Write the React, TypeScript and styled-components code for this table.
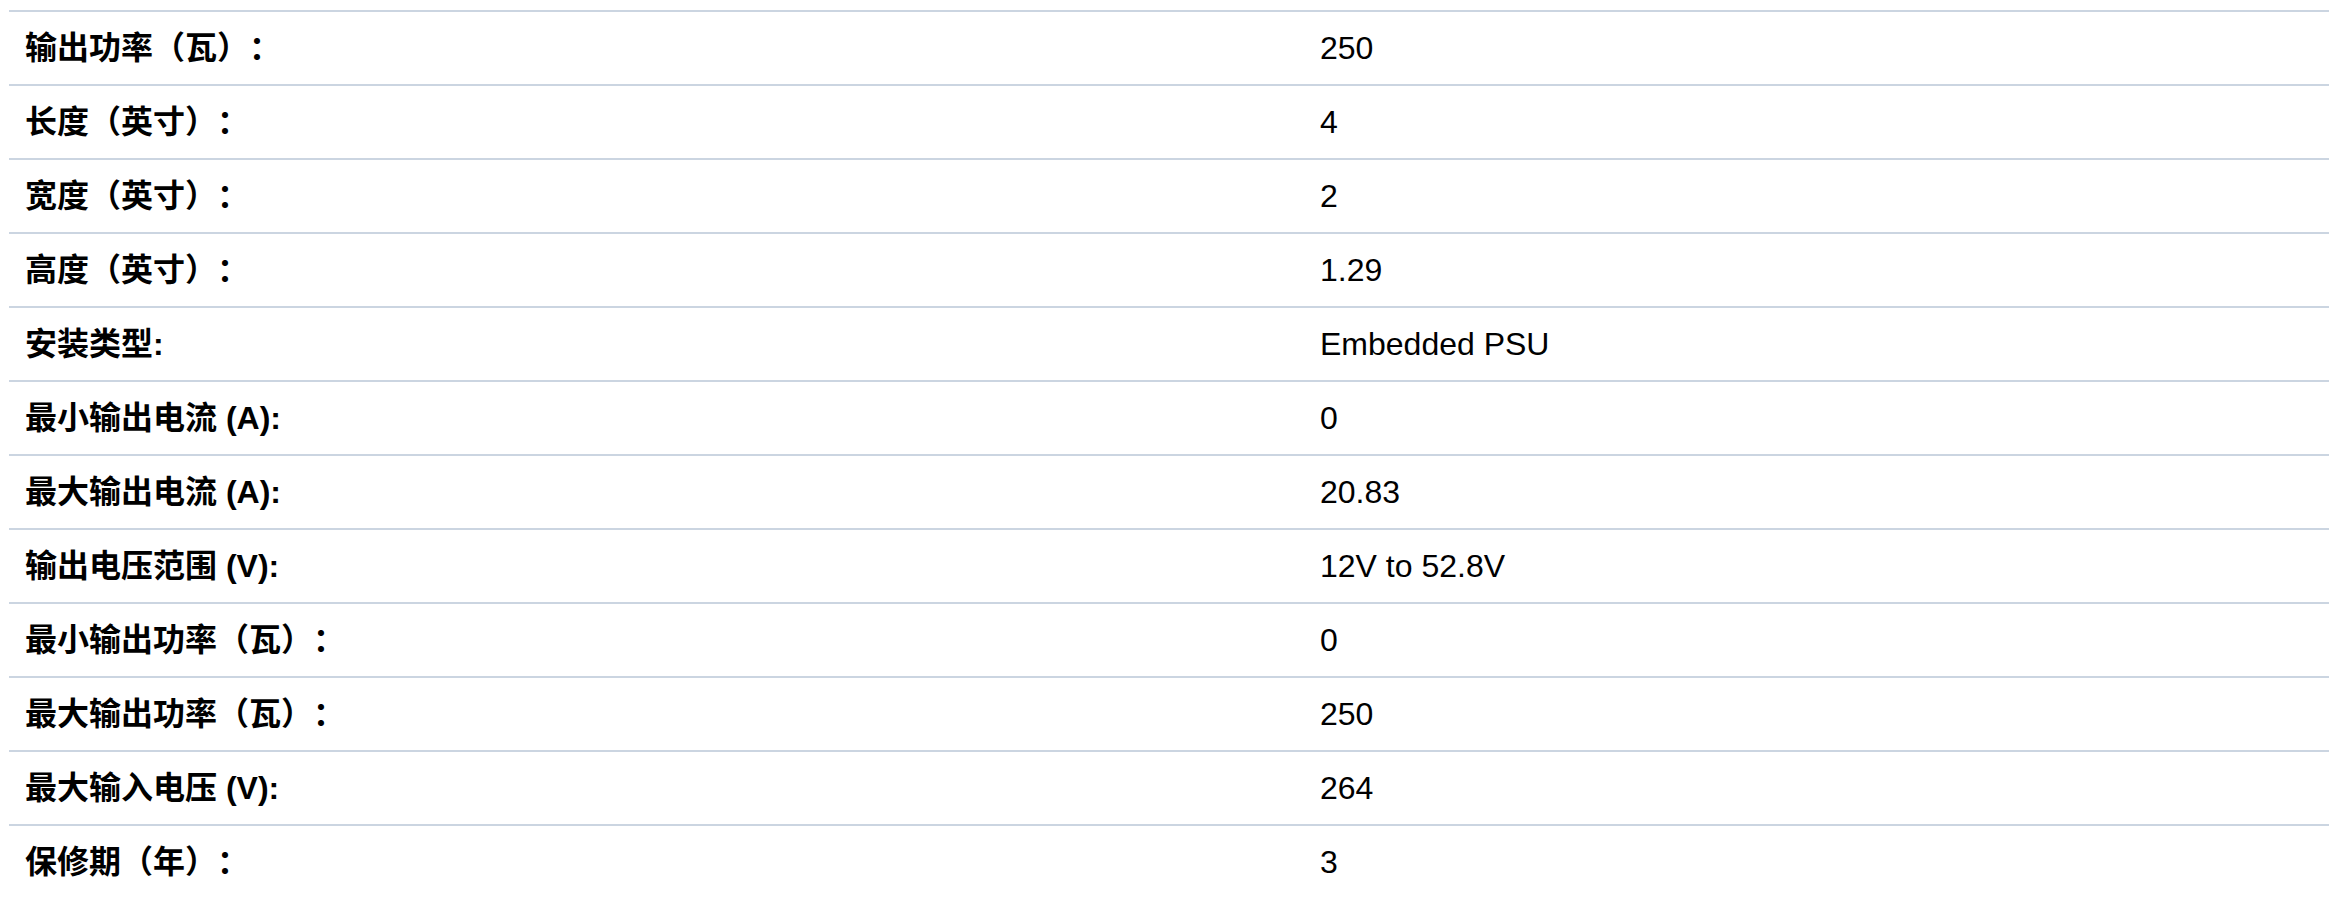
import styled, { createGlobalStyle } from "styled-components";

const GlobalStyle = createGlobalStyle`
    html, body {
        margin: 0;
        padding: 0;
        background: #ffffff;
    }
    body {
        font-family: "Liberation Sans", "Noto Sans CJK SC", Arial, sans-serif;
        color: #000000;
    }
`;

const specs = [
    { label: "输出功率（瓦）：", value: "250" },
    { label: "长度（英寸）：", value: "4" },
    { label: "宽度（英寸）：", value: "2" },
    { label: "高度（英寸）：", value: "1.29" },
    { label: "安装类型:", value: "Embedded PSU" },
    { label: "最小输出电流 (A):", value: "0" },
    { label: "最大输出电流 (A):", value: "20.83" },
    { label: "输出电压范围 (V):", value: "12V to 52.8V" },
    { label: "最小输出功率（瓦）：", value: "0" },
    { label: "最大输出功率（瓦）：", value: "250" },
    { label: "最大输入电压 (V):", value: "264" },
    { label: "保修期（年）：", value: "3" },
];

const SpecTable = () => (
    <Page>
        <Table>
            {specs.map((spec, idx) => (
                <Row key={idx}>
                    <LabelCell>{spec.label}</LabelCell>
                    <ValueCell>{spec.value}</ValueCell>
                </Row>
            ))}
        </Table>
    </Page>
);

export default function App() {
    return (
        <>
            <GlobalStyle />
            <SpecTable />
        </>
    );
}

const Page = styled.div`
    padding: 10px 12px 0 9px;
    height: 899px;
    box-sizing: border-box;
    overflow: hidden;
`;

const Table = styled.div`
    display: flex;
    flex-direction: column;
    width: 2320px;
`;

const Row = styled.div`
    display: grid;
    grid-template-columns: 1295px 1fr;
    height: 74px;
    box-sizing: border-box;
    border-top: 2px solid #cbd5e1;
`;

const Cell = styled.div`
    display: flex;
    align-items: center;
    padding: 0 16px;
    font-size: 32px;
    line-height: 40px;
    white-space: nowrap;
    text-spacing-trim: space-all;
    font-feature-settings: "halt" 0, "chws" 0;
`;

const LabelCell = styled(Cell)`
    font-weight: bold;
`;

const ValueCell = styled(Cell)`
    font-weight: normal;
`;
